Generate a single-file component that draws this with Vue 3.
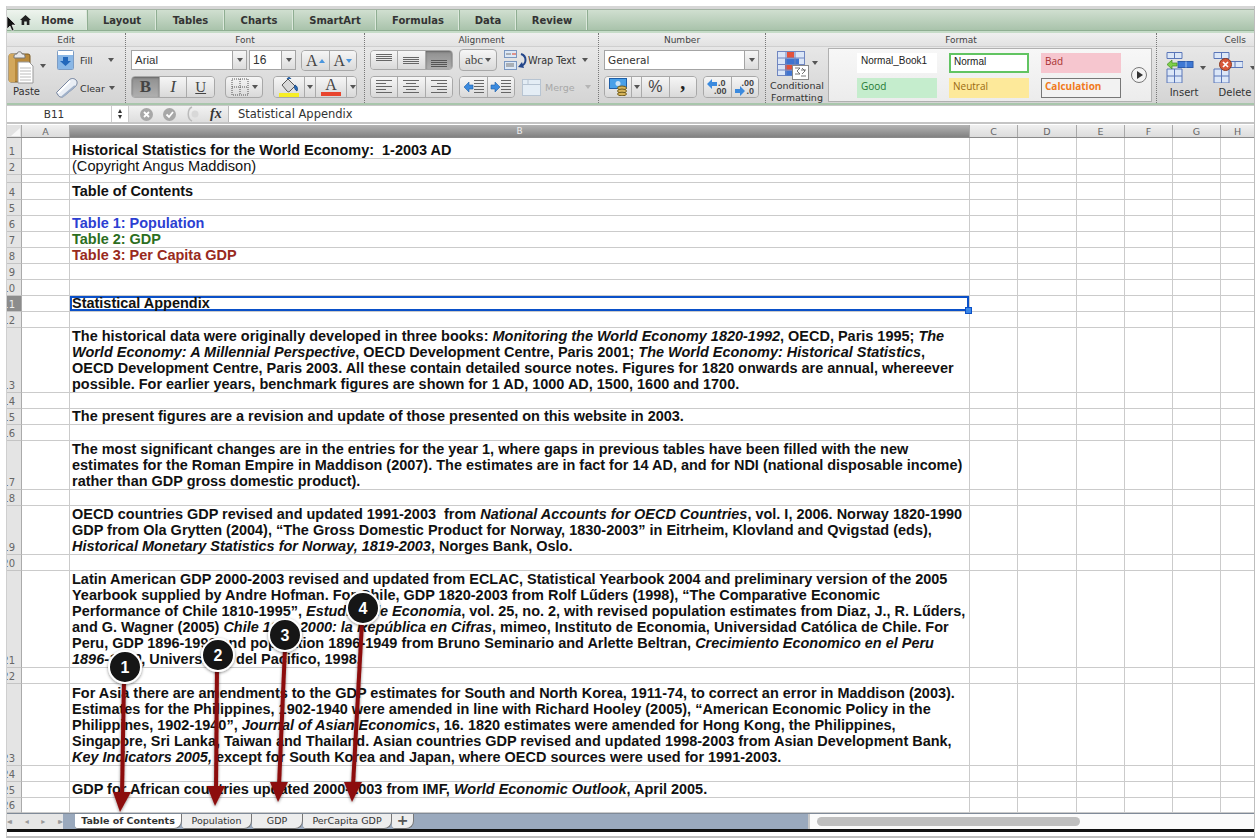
<script setup>
const mainTabs = ["Layout", "Tables", "Charts", "SmartArt", "Formulas", "Data", "Review"];

const rowData = [
  [21, ["Historical Statistics for the World Economy:  1-2003 AD"]],
  [16, ["(Copyright Angus Maddison)"], "plain"],
  [8],
  [17, ["Table of Contents"]],
  [16],
  [16, ["Table 1: Population"], "blue"],
  [16, ["Table 2: GDP"], "green"],
  [16, ["Table 3: Per Capita GDP"], "red"],
  [16],
  [16],
  [16, ["Statistical Appendix"], "sel"],
  [16],
  [65, [
    "The historical data were originally developed in three books: *Monitoring the World Economy 1820-1992*, OECD, Paris 1995; *The*",
    "*World Economy: A Millennial Perspective*, OECD Development Centre, Paris 2001; *The World Economy: Historical Statistics*,",
    "OECD Development Centre, Paris 2003. All these contain detailed source notes. Figures for 1820 onwards are annual, whereever",
    "possible. For earlier years, benchmark figures are shown for 1 AD, 1000 AD, 1500, 1600 and 1700."
  ]],
  [16],
  [16, ["The present figures are a revision and update of those presented on this website in 2003."]],
  [16],
  [49, [
    "The most significant changes are in the entries for the year 1, where gaps in previous tables have been filled with the new",
    "estimates for the Roman Empire in Maddison (2007). The estimates are in fact for 14 AD, and for NDI (national disposable income)",
    "rather than GDP gross domestic product)."
  ]],
  [16],
  [49, [
    "OECD countries GDP revised and updated 1991-2003  from *National Accounts for OECD Countries*, vol. I, 2006. Norway 1820-1990",
    "GDP from Ola Grytten (2004), “The Gross Domestic Product for Norway, 1830-2003” in Eitrheim, Klovland and Qvigstad (eds),",
    "*Historical Monetary Statistics for Norway, 1819-2003*, Norges Bank, Oslo."
  ]],
  [16],
  [97, [
    "Latin American GDP 2000-2003 revised and updated from ECLAC, Statistical Yearbook 2004 and preliminary version of the 2005",
    "Yearbook supplied by Andre Hofman. For Chile, GDP 1820-2003 from Rolf Lűders (1998), “The Comparative Economic",
    "Performance of Chile 1810-1995”, *Estudios de Economia*, vol. 25, no. 2, with revised population estimates from Diaz, J., R. Lűders,",
    "and G. Wagner (2005) *Chile 1810-2000: la República en Cifras*, mimeo, Instituto de Economia, Universidad Católica de Chile. For",
    "Peru, GDP 1896-1990 and population 1896-1949 from Bruno Seminario and Arlette Beltran, *Crecimiento Economico en el Peru*",
    "*1896-1990*, Universidad del Pacifico, 1998."
  ]],
  [16],
  [82, [
    "For Asia there are amendments to the GDP estimates for South and North Korea, 1911-74, to correct an error in Maddison (2003).",
    "Estimates for the Philippines, 1902-1940 were amended in line with Richard Hooley (2005), “American Economic Policy in the",
    "Philippines, 1902-1940”, *Journal of Asian Economics*, 16. 1820 estimates were amended for Hong Kong, the Philippines,",
    "Singapore, Sri Lanka, Taiwan and Thailand. Asian countries GDP revised and updated 1998-2003 from Asian Development Bank,",
    "*Key Indicators 2005,* except for South Korea and Japan, where OECD sources were used for 1991-2003."
  ]],
  [16],
  [16, ["GDP for African countries updated 2000-2003 from IMF, *World Economic Outlook*, April 2005."]],
  [15]
];

// *text* marks the italic runs of a line
const parseLine = (line) =>
  line.split("*").map((text, i) => ({ text, italic: i % 2 === 1 }));

const rows = rowData.map(([height, lines = [], kind = ""], i) => ({
  // the 8px spacer row is too short to show its number
  num: height > 8 ? i + 1 : "",
  key: i,
  height,
  kind,
  lines: lines.map(parseLine)
}));

const columns = [
  { name: "A", cls: "col-a" },
  { name: "B", cls: "col-b" },
  { name: "C", cls: "col-c" },
  { name: "D", cls: "col-d" },
  { name: "E", cls: "col-e" },
  { name: "F", cls: "col-f" },
  { name: "G", cls: "col-g" },
  { name: "H", cls: "col-h" }
];

const sheetTabs = [
  { name: "Table of Contents", cls: "t1" },
  { name: "Population", cls: "t2" },
  { name: "GDP", cls: "t3" },
  { name: "PerCapita GDP", cls: "t4" }
];

const arrows = [
  { n: 1, bx: 125, by: 667, x1: 124, y1: 680, x2: 122, y2: 795, tx: 120, ty: 812, hx: 122, hy: 792 },
  { n: 2, bx: 218, by: 655, x1: 217, y1: 668, x2: 216, y2: 790, tx: 215, ty: 806, hx: 216, hy: 786 },
  { n: 3, bx: 285, by: 635, x1: 285, y1: 648, x2: 279, y2: 786, tx: 278, ty: 802, hx: 279, hy: 782 },
  { n: 4, bx: 363, by: 608, x1: 362, y1: 622, x2: 353, y2: 786, tx: 352, ty: 802, hx: 353, hy: 782 }
];

const head = (a) =>
  `${a.hx - 9},${a.hy} ${a.hx + 9},${a.hy} ${a.tx},${a.ty}`;

const alignTop = [3, 5, 7, 9];
const alignMid = [6, 8, 10, 12];
const alignBot = [9, 11, 13, 15];
</script>

<template>
  <div class="page">
    <div class="win">
      <div class="top-strip"></div>

      <div class="tabbar">
        <div class="tab active">
          <svg width="11" height="10" viewBox="0 0 11 10"><path d="M5.500 0 0 5h1.600v5h2.600V6.600h2.600V10h2.600V5H11z" fill="#222" /></svg>
          <span>Home</span>
        </div>
        <div v-for="t in mainTabs" :key="t" class="tab" :class="'tab-' + t">{{ t }}</div>
      </div>

      <div class="ribbon">
        <!-- Edit -->
        <div class="group g-edit">
          <div class="gtitle">Edit</div>
          <div class="edit-body">
            <div class="paste">
              <svg width="26" height="33" viewBox="0 0 26 33">
                <rect x="1" y="3" width="21" height="28" rx="2" fill="#b98a3c" stroke="#7a5a24" />
                <rect x="1" y="3" width="6" height="28" fill="#d3a85c" />
                <path d="M6 5c0-2 2-2 3-2 0-3 5-3 5 0 1 0 3 0 3 2v2H6z" fill="#e8e8e8" stroke="#777" />
                <path d="M10 11h11l4 4v17H10z" fill="#fff" stroke="#999" />
                <path d="M12 17h11M12 20h11M12 23h11M12 26h11M12 29h11" stroke="#bbb" />
              </svg>
              <span class="paste-label">Paste</span>
            </div>
            <span class="caret paste-caret"></span>
            <div class="edit-col">
              <div class="edit-row">
                <svg width="17" height="20" viewBox="0 0 17 20">
                  <rect x=".5" y=".5" width="16" height="19" rx="1" fill="#fff" stroke="#7c9cc4" />
                  <rect x="1" y="5" width="15" height="14" fill="#8ab7e6" />
                  <path d="M6 7h5v4h3l-5.500 5L3 11h3z" fill="#2468bb" />
                </svg>
                <span class="edit-text">Fill</span>
                <span class="caret fill-caret"></span>
              </div>
              <div class="edit-row clear-row">
                <svg width="22" height="20" viewBox="0 0 22 20">
                  <path d="M1 14 13 2c2-2 5-2 7 0s1 5-1 7L8 18c-2 2-5 1-6-1s-2-2-1-3z" fill="#e9eef5" stroke="#6c7c98" />
                  <path d="M2 15 14 3" stroke="#fff" stroke-width="2" />
                  <path d="M6 19 19 8" stroke="#9fb0c8" stroke-width="2" />
                </svg>
                <span class="edit-text">Clear</span>
                <span class="caret clear-caret"></span>
              </div>
            </div>
          </div>
        </div>

        <!-- Font -->
        <div class="group g-font">
          <div class="gtitle">Font</div>
          <div class="gbody">
            <div class="line line1">
              <div class="combo font-name"><span>Arial</span><i class="drop"><span class="caret"></span></i></div>
              <div class="combo font-size"><span>16</span><i class="drop"><span class="caret"></span></i></div>
              <div class="seg size-seg">
                <button class="btn a-btn">A<span class="up"></span></button>
                <button class="btn a-btn">A<span class="down"></span></button>
              </div>
            </div>
            <div class="line line2">
              <div class="seg biu">
                <button class="btn on serif-b">B</button>
                <button class="btn serif-i">I</button>
                <button class="btn serif-u">U</button>
              </div>
              <button class="btn single border-btn">
                <svg width="18" height="18" viewBox="0 0 18 18"><path d="M1 1h16v16H1zM9 1v16M1 9h16" fill="none" stroke="#555" stroke-dasharray="1 1" /></svg>
                <span class="caret"></span>
              </button>
              <div class="seg colors">
                <button class="btn color-main">
                  <svg width="20" height="17" viewBox="0 0 20 17">
                    <path d="M3 8 9 2l7 7-5 5c-1 1-2 1-3 0z" fill="#d8d8d8" stroke="#555" />
                    <path d="M8 2c1-2 3-2 4 0M16 8c2 1 3 3 2 6-2-1-3-3-2-6z" fill="#2c70c0" stroke="#1d4e8c" />
                  </svg>
                  <span class="swatch yellow"></span>
                </button>
                <button class="btn color-drop"><span class="caret"></span></button>
                <button class="btn color-main text-a">
                  <span class="serif-a">A</span>
                  <span class="swatch redbar"></span>
                </button>
                <button class="btn color-drop"><span class="caret"></span></button>
              </div>
            </div>
          </div>
        </div>

        <!-- Alignment -->
        <div class="group g-align">
          <div class="gtitle">Alignment</div>
          <div class="gbody">
            <div class="line line1">
              <div class="seg align-seg">
                <button class="btn">
                  <svg width="16" height="18" viewBox="0 0 16 18"><path v-for="y in alignTop" :key="y" :d="`M0 ${y}.5h16`" stroke="#666" /></svg>
                </button>
                <button class="btn">
                  <svg width="16" height="18" viewBox="0 0 16 18"><path v-for="y in alignMid" :key="y" :d="`M0 ${y}.5h16`" stroke="#666" /></svg>
                </button>
                <button class="btn on">
                  <svg width="16" height="18" viewBox="0 0 16 18"><path v-for="y in alignBot" :key="y" :d="`M0 ${y}.5h16`" stroke="#555" /></svg>
                </button>
              </div>
              <button class="btn single abc">abc<span class="caret"></span></button>
              <div class="wrap-text">
                <svg width="23" height="20" viewBox="0 0 23 20">
                  <rect x=".5" y=".5" width="12" height="7" fill="#dce8f6" stroke="#7b97c0" />
                  <path d="M2 4h5" stroke="#777" /><path d="M8 4h4" stroke="#e03a20" />
                  <rect x=".5" y="11.500" width="12" height="8" fill="#dce8f6" stroke="#7b97c0" />
                  <path d="M2 14h8M2 16h8" stroke="#777" />
                  <path d="M17 4c6 2 6 10 0 12" fill="none" stroke="#24468a" stroke-width="2" />
                  <path d="m18 12-4 5 6 1z" fill="#24468a" />
                </svg>
                <span>Wrap Text</span>
                <span class="caret"></span>
              </div>
            </div>
            <div class="line line2">
              <div class="seg align-seg">
                <button class="btn"><svg width="16" height="16" viewBox="0 0 16 16"><path d="M0 1.500h16M0 4.500h10M0 7.500h16M0 10.500h10M0 13.500h16" stroke="#666" /></svg></button>
                <button class="btn"><svg width="16" height="16" viewBox="0 0 16 16"><path d="M0 1.500h16M3 4.500h10M0 7.500h16M3 10.500h10M0 13.500h16" stroke="#666" /></svg></button>
                <button class="btn"><svg width="16" height="16" viewBox="0 0 16 16"><path d="M0 1.500h16M6 4.500h10M0 7.500h16M6 10.500h10M0 13.500h16" stroke="#666" /></svg></button>
              </div>
              <div class="seg indent-seg">
                <button class="btn">
                  <svg width="21" height="16" viewBox="0 0 21 16"><path d="M11 1.500h10M11 4.500h10M11 7.500h10M11 10.500h10M11 13.500h10" stroke="#666" /><path d="M1 8l5-5v3h4v4H6v3z" fill="#3b8ade" stroke="#1d5ea8" stroke-width=".6" /></svg>
                </button>
                <button class="btn">
                  <svg width="21" height="16" viewBox="0 0 21 16"><path d="M11 1.500h10M11 4.500h10M11 7.500h10M11 10.500h10M11 13.500h10" stroke="#666" /><path d="M10 8 5 3v3H1v4h4v3z" fill="#3b8ade" stroke="#1d5ea8" stroke-width=".6" /></svg>
                </button>
              </div>
              <div class="merge">
                <svg width="19" height="17" viewBox="0 0 19 17"><rect x=".5" y=".5" width="18" height="16" fill="#e4edf5" stroke="#b7c4d2" /><path d="M6 .5v5M.5 5.500h18" stroke="#b7c4d2" /></svg>
                <span>Merge</span>
                <span class="caret faint"></span>
              </div>
            </div>
          </div>
        </div>

        <!-- Number -->
        <div class="group g-number">
          <div class="gtitle">Number</div>
          <div class="gbody">
            <div class="line line1">
              <div class="combo general"><span>General</span><i class="drop"><span class="caret"></span></i></div>
            </div>
            <div class="line line2">
              <div class="seg money-seg">
                <button class="btn money">
                  <svg width="19" height="18" viewBox="0 0 19 18">
                    <rect x=".5" y=".5" width="17" height="10" fill="#48a0e8" stroke="#1f5fa8" />
                    <circle cx="9" cy="5.500" r="2.500" fill="#c8e2f6" />
                    <ellipse cx="13" cy="10" rx="4.500" ry="2" fill="#d6b45a" stroke="#6e5a1e" />
                    <ellipse cx="13" cy="13" rx="4.500" ry="2" fill="#d6b45a" stroke="#6e5a1e" />
                    <ellipse cx="13" cy="16" rx="4.500" ry="1.800" fill="#d6b45a" stroke="#6e5a1e" />
                  </svg>
                </button>
                <button class="btn color-drop"><span class="caret"></span></button>
                <button class="btn pct">%</button>
                <button class="btn comma">,</button>
              </div>
              <div class="seg dec-seg">
                <button class="btn dec">
                  <svg width="10" height="10" viewBox="0 0 10 10"><path d="M0 5l5-5v3h5v4H5v3z" fill="#3b8ade" /></svg>
                  <span class="dec-t1">.0</span><span class="dec-t2">.00</span>
                </button>
                <button class="btn dec">
                  <svg class="dec-right" width="10" height="10" viewBox="0 0 10 10"><path d="M10 5 5 0v3H0v4h5v3z" fill="#3b8ade" /></svg>
                  <span class="dec-t3">.00</span><span class="dec-t4">.0</span>
                </button>
              </div>
            </div>
          </div>
        </div>

        <!-- Format -->
        <div class="group g-format">
          <div class="gtitle">Format</div>
          <div class="format-body">
            <div class="cond">
              <div class="cond-icon">
                <svg width="33" height="29" viewBox="0 0 33 29">
                  <rect x=".5" y=".5" width="27" height="24" fill="#dbe6f7" stroke="#7086c0" />
                  <rect x="10" y="1" width="7" height="6" fill="#e2523c" />
                  <rect x="8" y="7.500" width="14" height="6" fill="#3f74d0" />
                  <rect x="8" y="13.500" width="17" height="6" fill="#e2523c" />
                  <rect x="8" y="19.500" width="8" height="5" fill="#3f74d0" />
                  <path d="M9 .5v24M18 .5v24M.5 7h27M.5 13.500h27M.5 19h27" stroke="#7086c0" />
                  <rect x="15.500" y="14.500" width="16" height="14" fill="#fff" stroke="#888" />
                  <path d="M18 17h5l-3 3 3 3h-5M25 17l3 3-3 3M24 19h5M24 25h5" fill="none" stroke="#555" stroke-width=".8" />
                </svg>
                <span class="caret cond-caret"></span>
              </div>
              <span class="cond-text">Conditional<br />Formatting</span>
            </div>
            <div class="gallery">
              <div class="chips">
                <span class="chip c-book">Normal_Book1</span>
                <span class="chip c-normal">Normal</span>
                <span class="chip c-bad">Bad</span>
                <span class="chip c-good">Good</span>
                <span class="chip c-neutral">Neutral</span>
                <span class="chip c-calc">Calculation</span>
              </div>
              <div class="more"><span></span></div>
            </div>
          </div>
        </div>

        <!-- Cells -->
        <div class="group g-cells">
          <div class="gtitle cells-title">Cells</div>
          <div class="cells-body">
            <div class="cell-btn">
              <svg width="30" height="31" viewBox="0 0 30 31">
                <path d="M1 .5h15v6H1zM8.500.5v6M1 17h15v14H1zM8.500 17v14M1 24h15" fill="#dce7f7" stroke="#5a76b8" />
                <rect x="12" y="9.500" width="15" height="6" fill="#3e78d4" stroke="#2d5cac" />
                <path d="M20 9.500v6" stroke="#a8c4ee" />
                <path d="M1 12.500 6 8v3h5v3H6v3z" fill="#7ed04a" stroke="#3f8a1f" stroke-width=".7" />
              </svg>
              <span class="caret cell-caret"></span>
              <span class="cell-label">Insert</span>
            </div>
            <div class="cell-btn del">
              <svg width="30" height="31" viewBox="0 0 30 31">
                <path d="M1 .5h15v6H1zM8.500.5v6M1 17h15v14H1zM8.500 17v14M1 24h15M15 9.500h15v6H15zM22 9.500v6" fill="#dce7f7" stroke="#5a76b8" />
                <circle cx="12.500" cy="12.500" r="6" fill="#d8583a" stroke="#8a3a20" />
                <path d="m10 10 5 5M15 10l-5 5" stroke="#fff" stroke-width="1.700" />
              </svg>
              <span class="caret cell-caret"></span>
              <span class="cell-label">Delete</span>
            </div>
          </div>
        </div>
      </div>

      <div class="formula">
        <div class="name-box">B11</div>
        <div class="stepper"><span class="s-up"></span><span class="s-down"></span></div>
        <div class="f-tools">
          <span class="f-round">
            <svg width="13" height="13" viewBox="0 0 13 13"><circle cx="6.500" cy="6.500" r="6.500" fill="#a8a8a8" /><path d="m4 4 5 5M9 4 4 9" stroke="#fff" stroke-width="1.800" /></svg>
          </span>
          <span class="f-round">
            <svg width="13" height="13" viewBox="0 0 13 13"><circle cx="6.500" cy="6.500" r="6.500" fill="#a8a8a8" /><path d="m3.500 6.500 2.500 2.500 4-5" fill="none" stroke="#fff" stroke-width="1.800" /></svg>
          </span>
          <span class="f-eq">
            <svg width="14" height="16" viewBox="0 0 14 16"><path d="M6 1C1 3 1 13 6 15" fill="none" stroke="#bbb" stroke-width="1.500" /><circle cx="9" cy="8" r="3.500" fill="#d8d8d8" /></svg>
          </span>
          <span class="f-x">fx</span>
        </div>
        <div class="f-input">Statistical Appendix</div>
      </div>

      <div class="col-head">
        <div class="corner"><span></span></div>
        <div v-for="c in columns" :key="c.name" class="ch" :class="c.cls">{{ c.name }}</div>
      </div>

      <div class="grid">
        <div v-for="r in rows" :key="r.key" class="row" :style="{ height: r.height + 'px' }">
          <div class="rh" :class="{ 'rh-sel': r.kind === 'sel' }">{{ r.num }}</div>
          <div class="cell col-a"></div>
          <div class="cell col-b b-cell" :class="r.kind">
            <div v-for="(l, i) in r.lines" :key="i" class="txt">
              <span v-for="(s, j) in l" :key="j" :class="{ it: s.italic }">{{ s.text }}</span>
            </div>
            <span v-if="r.kind === 'sel'" class="handle"></span>
          </div>
          <div class="cell col-c"></div>
          <div class="cell col-d"></div>
          <div class="cell col-e"></div>
          <div class="cell col-f"></div>
          <div class="cell col-g"></div>
          <div class="cell col-h"></div>
        </div>
      </div>

      <div class="sheetbar">
        <div class="nav">
          <span class="nav-g">◂◂</span><span class="nav-g">◂</span><span class="nav-g">▸</span><span class="nav-g">▸▸</span>
        </div>
        <div class="tabs-area">
          <div v-for="t in sheetTabs" :key="t.name" class="stab" :class="t.cls">{{ t.name }}</div>
          <div class="stab plus">+</div>
        </div>
        <div class="hscroll"><span></span></div>
      </div>
      <div class="blackline"></div>
    </div>

    <svg class="notes" width="1260" height="839" viewBox="0 0 1260 839">
      <defs>
        <filter id="sh" x="-50%" y="-50%" width="200%" height="200%">
          <feDropShadow dx="0" dy="1" stdDeviation="1.500" flood-color="#000" flood-opacity=".45" />
        </filter>
      </defs>
      <g v-for="a in arrows" :key="a.n">
        <g filter="url(#sh)">
          <line :x1="a.x1" :y1="a.y1" :x2="a.x2" :y2="a.y2" stroke="#8c0c0c" stroke-width="4" />
          <polygon :points="head(a)" fill="#8c0c0c" />
        </g>
        <circle :cx="a.bx" :cy="a.by" r="16" fill="#141414" stroke="#fff" stroke-width="2" filter="url(#sh)" />
        <text :x="a.bx" :y="a.by + 6" class="badge-n" text-anchor="middle">{{ a.n }}</text>
      </g>
    </svg>

    <svg class="cursor" width="11" height="17" viewBox="0 0 11 17">
      <path d="M1 0v13l3-3 2 5 2-1-2-5h4z" fill="#111" stroke="#fff" stroke-width=".6" />
    </svg>
  </div>
</template>

<style scoped>
.page {
  position: relative;
  width: 1260px;
  height: 839px;
  overflow: hidden;
  background: #fff;
  padding: 6px 6px 0 6px;
  box-sizing: border-box;
  font-family: "DejaVu Sans", sans-serif;
  color: #333;
}
.win {
  width: 1247px;
  height: 830px;
  border-left: 1px solid #cfcfcf;
  border-right: 1px solid #bdbdbd;
  border-bottom: 2px solid #bdbdbd;
  box-sizing: content-box;
  display: flex;
  flex-direction: column;
  background: #fff;
  overflow: hidden;
}
.top-strip {
  height: 3px;
  flex: none;
  background: #d6d6d6;
}

/* main tabs */
.tabbar {
  flex: none;
  display: flex;
  background: linear-gradient(#d0dfd0, #a9c3ab);
  border-top: 1px solid #a4b3a4;
  border-bottom: 1px solid #8fae92;
  box-sizing: content-box;
  height: 20px;
}
.tab {
  box-sizing: border-box;
  display: flex;
  align-items: center;
  justify-content: center;
  gap: 10px;
  font-size: 10px;
  font-weight: 700;
  color: #333;
  border-right: 1px solid #8fae92;
  box-shadow: inset -1px 0 #dce8dc;
}
.tab.active {
  width: 81px;
  background: linear-gradient(#eef4ee, #cfe0d2);
  border-right: 1px solid #8fae92;
}
.tab-Layout { width: 69px; }
.tab-Tables { width: 68px; }
.tab-Charts { width: 69px; }
.tab-SmartArt { width: 83px; }
.tab-Formulas { width: 83px; }
.tab-Data { width: 57px; }
.tab-Review { width: 71px; }

/* ribbon */
.ribbon {
  flex: none;
  height: 70px;
  display: flex;
  border-top: 2px solid #c6dcc8;
  border-bottom: 2px solid #a9c6ac;
  box-sizing: content-box;
  background: linear-gradient(#ececec, #d4d4d4);
}
.group {
  box-sizing: border-box;
  border-right: 1px dotted #777;
  display: flex;
  flex-direction: column;
  flex: none;
}
.g-edit { width: 119px; }
.g-font { width: 239px; }
.g-align { width: 234px; }
.g-number { width: 167px; }
.g-format { width: 391px; }
.g-cells { width: 97px; border-right: 0; }
.gtitle {
  height: 13px;
  line-height: 15px;
  text-align: center;
  font-size: 9px;
  color: #444;
  border-bottom: 1px solid #cfcfcf;
  background: linear-gradient(#efefef, #e2e2e2);
  box-sizing: content-box;
}
.cells-title {
  text-align: right;
  padding-right: 8px;
}
.gbody {
  padding: 3px 0 0 5px;
  display: flex;
  flex-direction: column;
  gap: 6px;
}
.line {
  display: flex;
}
.line1 { height: 20px; }
.line2 { height: 22px; }

.caret {
  display: inline-block;
  flex: none;
  width: 0;
  height: 0;
  border-left: 3.5px solid transparent;
  border-right: 3.5px solid transparent;
  border-top: 4px solid #555;
}
.caret.faint { border-top-color: #b5b5b5; }

.btn {
  border: 0;
  padding: 0;
  margin: 0;
  background: linear-gradient(#f6f6f6, #d9d9d9);
  display: flex;
  align-items: center;
  justify-content: center;
  font-family: inherit;
  color: #444;
  border-right: 1px solid #aaa;
}
.btn:last-child { border-right: 0; }
.btn.on { background: linear-gradient(#8f8f8f, #b0b0b0); box-shadow: inset 0 1px 2px #666; }
.btn.single {
  border: 1px solid #a8a8a8;
  border-radius: 4px;
}
.seg {
  display: flex;
  border: 1px solid #a8a8a8;
  border-radius: 4px;
  overflow: hidden;
  box-sizing: border-box;
}
.seg .btn { flex: 1; }

.combo {
  box-sizing: border-box;
  display: flex;
  background: #fff;
  border: 1px solid #a4a4a4;
  font-size: 11px;
  color: #333;
  align-items: center;
}
.combo > span { flex: 1; padding-left: 3px; }
.drop {
  width: 13px;
  height: 100%;
  border-left: 1px solid #a4a4a4;
  background: linear-gradient(#f6f6f6, #dcdcdc);
  display: flex;
  align-items: center;
  justify-content: center;
}
.font-name { width: 116px; margin-right: 2px; font-family: "Liberation Sans", sans-serif; font-size: 11.5px; }
.font-size { width: 47px; margin-right: 5px; font-family: "Liberation Sans", sans-serif; font-size: 12px; }
.general { width: 155px; font-family: "DejaVu Sans", sans-serif; font-size: 10.5px; }
.size-seg { width: 56px; height: 21px; }
.a-btn {
  font-family: "Liberation Serif", serif;
  font-size: 16px;
  gap: 1px;
}
.up, .down {
  width: 0;
  height: 0;
  border-left: 3.5px solid transparent;
  border-right: 3.5px solid transparent;
}
.up { border-bottom: 4px solid #4a96de; }
.down { border-top: 4px solid #4a96de; }

.biu { width: 84px; font-family: "Liberation Serif", serif; font-size: 16px; }
.serif-b { font-family: "Liberation Serif", serif; font-weight: 700; font-size: 17px; }
.serif-i { font-family: "Liberation Serif", serif; font-style: italic; font-size: 17px; }
.serif-u { font-family: "Liberation Serif", serif; text-decoration: underline; font-size: 15px; }
.border-btn { width: 38px; margin-left: 10px; gap: 3px; }
.colors { width: 84px; margin-left: 10px; }
.colors .color-main {
  flex: none;
  width: 31px;
  position: relative;
  flex-direction: column;
  justify-content: flex-start;
}
.colors .color-drop { flex: none; width: 11px; }
.swatch {
  width: 20px;
  height: 4px;
  display: block;
  margin-top: -1px;
}
.yellow { background: #f6ee25; }
.redbar { background: #e8452e; }
.serif-a { font-family: "Liberation Serif", serif; font-size: 16px; line-height: 16px; }

.align-seg { width: 83px; }
.abc {
  width: 38px;
  margin-left: 6px;
  height: 22px;
  margin-top: -1px;
  font-family: "Liberation Serif", serif;
  font-size: 13px;
  gap: 2px;
}
.wrap-text {
  margin-left: 7px;
  display: flex;
  align-items: center;
  gap: 1px;
  font-size: 9.7px;
  white-space: nowrap;
}
.wrap-text .caret { margin-left: 5px; }
.indent-seg { width: 56px; margin-left: 6px; }
.merge {
  margin-left: 7px;
  display: flex;
  align-items: center;
  gap: 4px;
  font-size: 9.5px;
  color: #a8a8a8;
}
.merge .caret { margin-left: 6px; }

.money-seg { width: 93px; }
.money-seg .money { flex: none; width: 27px; }
.money-seg .color-drop { flex: none; width: 10px; }
.pct { font-family: "Liberation Sans", sans-serif; font-size: 16px; }
.comma { font-family: "Liberation Serif", serif; font-weight: 700; font-size: 20px; padding-bottom: 10px; color: #222; }
.dec-seg { width: 56px; margin-left: 6px; }
.dec {
  position: relative;
  font-size: 9px;
}
.dec svg { position: absolute; left: 3px; top: 2px; }
.dec svg.dec-right { top: 9px; }
.dec span { position: absolute; font-family: "Liberation Sans", sans-serif; font-weight: 700; line-height: 9px; color: #444; }
.dec-t1 { left: 14px; top: 2px; }
.dec-t2 { left: 10px; top: 10px; }
.dec-t3 { left: 10px; top: 2px; }
.dec-t4 { left: 15px; top: 10px; }

/* edit group */
.edit-body {
  display: flex;
  position: relative;
}
.paste {
  width: 36px;
  padding-top: 4px;
  display: flex;
  flex-direction: column;
}
.paste svg { margin-left: 1px; }
.paste-label { font-size: 10px; margin-top: 2px; margin-left: 6px; }
.paste-caret { margin: 17px 0 0 -3px; align-self: flex-start; }
.edit-col {
  margin-left: 11px;
  padding-top: 3px;
}
.edit-row {
  display: flex;
  align-items: center;
  gap: 6px;
  height: 20px;
  font-size: 9.5px;
}
.clear-row { margin-top: 8px; margin-left: -1px; gap: 2px; }
.edit-text { width: 24px; }
.fill-caret { margin-left: -2px; }
.clear-caret { margin-left: 3px; }

/* format group */
.format-body {
  display: flex;
  padding-top: 1px;
}
.cond {
  width: 62px;
  display: flex;
  flex-direction: column;
  align-items: center;
  flex: none;
}
.cond-icon {
  display: flex;
  margin-top: 3px;
  height: 29px;
}
.cond-caret { margin: 10px 0 0 2px; }
.cond-text {
  font-size: 9.5px;
  line-height: 12px;
  text-align: center;
  white-space: nowrap;
}
.gallery {
  width: 324px;
  height: 54px;
  box-sizing: border-box;
  border: 1px solid #b0b0b0;
  background: linear-gradient(#f7f7f7, #ececec);
  display: flex;
  padding: 4px 0 0 28px;
}
.chips {
  display: grid;
  grid-template-columns: 80px 80px 80px;
  grid-auto-rows: 20px;
  column-gap: 12px;
  row-gap: 5px;
}
.chip {
  box-sizing: border-box;
  padding-left: 4px;
  line-height: 16px;
  font-family: "Open Sans", sans-serif;
  font-size: 10px;
  white-space: nowrap;
}
.c-book { background: #fff; color: #222; font-family: "Liberation Sans", sans-serif; }
.c-normal { background: #fff; color: #222; border: 2px solid #62c462; padding-left: 3px; line-height: 14px; font-family: "Liberation Sans", sans-serif; }
.c-bad { background: #f6c6cf; color: #a83030; }
.c-good { background: #c5edcd; color: #1e7a32; }
.c-neutral { background: #fde99a; color: #9a6a10; }
.c-calc { background: #f2f2f2; color: #f07a20; border: 1px solid #777; font-weight: 700; padding-left: 3px; line-height: 15px; }
.more {
  width: 16px;
  height: 16px;
  margin: 14px 0 0 10px;
  border: 1px solid #777;
  border-radius: 50%;
  background: #f4f4f4;
  box-sizing: border-box;
  display: flex;
  align-items: center;
  justify-content: center;
}
.more span {
  width: 0;
  height: 0;
  margin-left: 2px;
  border-top: 4px solid transparent;
  border-bottom: 4px solid transparent;
  border-left: 6px solid #333;
}

/* cells group */
.cells-body {
  display: flex;
  padding: 5px 0 0 9px;
  gap: 17px;
}
.cell-btn {
  position: relative;
  width: 30px;
  height: 50px;
}
.cell-btn svg { display: block; }
.cell-caret { position: absolute; left: 34px; top: 14px; }
.del .cell-caret { left: 37px; }
.cell-label {
  position: absolute;
  top: 35px;
  left: 0;
  width: 36px;
  text-align: center;
  font-size: 10px;
}
.del .cell-label { left: 4px; }

/* formula bar */
.formula {
  flex: none;
  height: 16px;
  display: flex;
  border-top: 1px solid #c8c8c8;
  border-bottom: 2px solid #c4c4c4;
  box-sizing: content-box;
  background: #fff;
  margin-bottom: 1px;
}
.name-box {
  box-sizing: border-box;
  width: 104px;
  text-align: center;
  font-size: 10.5px;
  line-height: 16px;
  padding-right: 10px;
}
.stepper {
  width: 18px;
  display: flex;
  flex-direction: column;
  align-items: center;
  justify-content: center;
  gap: 2px;
  border-left: 1px solid #ccc;
  border-right: 1px solid #ccc;
  box-sizing: border-box;
}
.s-up, .s-down {
  width: 0;
  height: 0;
  border-left: 2.5px solid transparent;
  border-right: 2.5px solid transparent;
}
.s-up { border-bottom: 4px solid #333; }
.s-down { border-top: 4px solid #333; }
.f-tools {
  width: 100px;
  background: linear-gradient(#f2f2f2, #dedede);
  display: flex;
  align-items: center;
  border-right: 1px solid #bbb;
  box-sizing: border-box;
  padding-left: 11px;
  gap: 10px;
}
.f-round { display: flex; }
.f-eq { display: flex; }
.f-x {
  font-family: "Liberation Serif", serif;
  font-style: italic;
  font-weight: 700;
  font-size: 14px;
  line-height: 16px;
  color: #333;
}
.f-input {
  flex: 1;
  padding-left: 9px;
  font-size: 11.5px;
  line-height: 16px;
  color: #333;
}

/* sheet */
.col-head {
  display: flex;
  height: 13px;
  box-sizing: border-box;
  border-bottom: 1px solid #8a8a8a;
  flex: none;
}
.corner {
  width: 15px;
  flex: none;
  box-sizing: border-box;
  background: #e2e2e2;
  border-right: 1px solid #aaa;
  position: relative;
}
.corner span {
  position: absolute;
  right: 1px;
  bottom: 1px;
  width: 0;
  height: 0;
  border-left: 9px solid transparent;
  border-bottom: 8px solid #f8f8f8;
}
.ch {
  box-sizing: border-box;
  flex: none;
  text-align: center;
  font-family: "DejaVu Sans", sans-serif;
  font-size: 9.5px;
  line-height: 13px;
  color: #666;
  background: linear-gradient(#f0f0f0, #dcdcdc);
  border-right: 1px solid #a8a8a8;
}
.ch.col-b {
  background: linear-gradient(#b4b4b4, #828282);
  color: #eee;
  font-size: 9px;
}
.col-a { width: 48px; }
.col-b { width: 900px; }
.col-c { width: 48px; }
.col-d { width: 59px; }
.col-e { width: 48px; }
.col-f { width: 48px; }
.col-g { width: 48px; }
.col-h { width: 33px; border-right: 0 !important; }

.grid { flex: none; }
.row {
  display: flex;
  box-sizing: border-box;
}
.rh {
  width: 15px;
  flex: none;
  box-sizing: border-box;
  overflow: hidden;
  direction: rtl;
  white-space: nowrap;
  padding-right: 6px;
  display: flex;
  align-items: flex-end;
  font-family: "DejaVu Sans", sans-serif;
  font-size: 10px;
  line-height: 12px;
  color: #666;
  background: #e4e4e4;
  border-right: 1px solid #aaa;
  border-bottom: 1px solid #c4c4c4;
}
.rh-sel { background: #8c8c8c; color: #eee; }
.cell {
  flex: none;
  box-sizing: border-box;
  border-right: 1px solid #cbcbcb;
  border-bottom: 1px solid #cbcbcb;
}
.b-cell {
  position: relative;
  display: flex;
  flex-direction: column;
  justify-content: flex-end;
  padding-left: 2px;
  font-family: "Liberation Sans", Arial, sans-serif;
  font-weight: 700;
  font-size: 14.48px;
  line-height: 16px;
  color: #111;
  white-space: pre;
}
.txt { height: 16px; flex: none; }
.it { font-style: italic; }
.plain { font-weight: 400; font-size: 14.6px; }
.blue { color: #2c3fd2; }
.green { color: #2c6e1e; }
.red { color: #982a20; }
.sel {
  box-shadow: inset 0 0 0 2px #0a50c8;
  overflow: visible;
}
.handle {
  position: absolute;
  right: -3px;
  bottom: -3px;
  width: 5px;
  height: 5px;
  background: #3a86e6;
  border: 1px solid #0a50c8;
  z-index: 2;
}

/* bottom bar */
.sheetbar {
  flex: none;
  height: 16px;
  display: flex;
  background: #9aa9bd;
  border-top: 1px solid #7f8a98;
  box-sizing: border-box;
}
.nav {
  width: 56px;
  flex: none;
  background: #e6e6e6;
  display: flex;
  align-items: center;
  justify-content: space-between;
  padding: 0 3px 0 0;
  box-sizing: border-box;
  font-size: 8px;
  color: #999;
}
.nav-g { letter-spacing: -3px; }
.tabs-area {
  display: flex;
  width: 745px;
  flex: none;
  padding-left: 12px;
  box-sizing: border-box;
}
.stab {
  box-sizing: border-box;
  flex: none;
  height: 15px;
  background: #ededed;
  border-right: 1px solid #777;
  border-bottom: 1px solid #777;
  border-radius: 0 0 8px 3px;
  font-size: 9.5px;
  line-height: 13px;
  text-align: center;
  color: #333;
  white-space: nowrap;
}
.t1 { width: 107px; background: #fff; font-weight: 700; font-size: 9.5px; }
.t2 { width: 70px; }
.t3 { width: 51px; }
.t4 { width: 89px; }
.plus { width: 22px; font-size: 14px; font-weight: 700; color: #555; }
.hscroll {
  flex: 1;
  background: #fbfbfb;
  border-left: 2px solid #c9c9c9;
  padding: 3px 0 0 7px;
}
.hscroll span {
  display: block;
  width: 263px;
  height: 9px;
  border-radius: 5px;
  background: #bfbfbf;
}
.blackline {
  flex: none;
  height: 3px;
  background: #111;
}

.notes {
  position: absolute;
  left: 0;
  top: 0;
  pointer-events: none;
}
.badge-n {
  font-family: "Liberation Sans", Arial, sans-serif;
  font-weight: 700;
  font-size: 16px;
  fill: #fff;
}
.cursor {
  position: absolute;
  left: 6px;
  top: 16px;
}
</style>

<style>
html, body {
  margin: 0;
  background: #fff;
}
</style>
